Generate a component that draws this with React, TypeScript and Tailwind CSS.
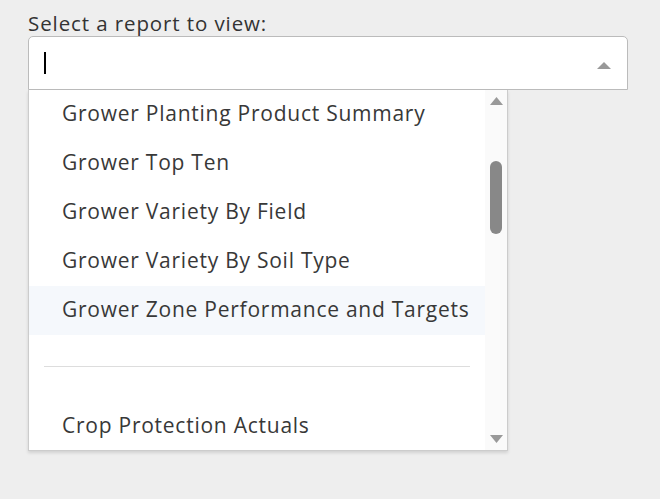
const reports = [
  'Grower Planting Product Summary',
  'Grower Top Ten',
  'Grower Variety By Field',
  'Grower Variety By Soil Type',
  'Grower Zone Performance and Targets',
];

function Triangle({ up, w, h, className }: { up?: boolean; w: number; h: number; className?: string }) {
  return (
    <svg width={w} height={h} viewBox={`0 0 ${w} ${h}`} className={className}>
      <path d={up ? `M0 ${h} L${w / 2} 0 L${w} ${h} Z` : `M0 0 L${w} 0 L${w / 2} ${h} Z`} fill="#999999" />
    </svg>
  );
}

export default function App() {
  const font = { fontFamily: '"Open Sans", sans-serif' };
  return (
    <div className="min-h-screen w-[660px] h-[499px] bg-[#eeeeee] px-[28px] pt-[11px]" style={font}>
      <label className="block text-[20.5px] leading-[25px] text-[#333333] tracking-[0.9px]">
        Select a report to view:
      </label>

      <div className="w-[600px] h-[54px] bg-white border border-[#bbbbbb] rounded-t-[5px] flex items-center pl-[15px] pr-[15px]">
        <div className="w-[2px] h-[22px] bg-black" />
        <div className="flex-1" />
        <Triangle up w={14} h={7} className="mr-[1px] mt-[4px]" />
      </div>

      <div className="w-[480px] h-[361px] bg-white border-x border-b border-[#cccccc] shadow-[0_2px_3px_rgba(0,0,0,0.12)] flex overflow-hidden">
        <ul className="flex-1 text-[21px] text-[#383838] tracking-[0.75px]">
          {reports.map((r, i) => (
            <li
              key={r}
              className={`h-[49px] flex items-center pl-[33px] pb-[1px] ${i === reports.length - 1 ? 'bg-[#f5f8fc]' : ''}`}
            >
              {r}
            </li>
          ))}
          <li className="h-[67px] flex items-center px-[15px]">
            <div className="w-full h-px bg-[#dddddd] mb-[4px]" />
          </li>
          <li className="h-[49px] flex items-center pl-[33px] pb-[1px]">Crop Protection Actuals</li>
        </ul>
        <div className="w-[22px] bg-[#fafafa] flex flex-col items-center pt-[7px] pb-[7px]">
          <Triangle up w={13} h={8} />
          <div className="flex-1 w-full flex flex-col items-center">
            <div className="mt-[56px] w-[12px] h-[73px] rounded-full bg-[#888888]" />
          </div>
          <Triangle w={13} h={8} />
        </div>
      </div>
    </div>
  );
}
